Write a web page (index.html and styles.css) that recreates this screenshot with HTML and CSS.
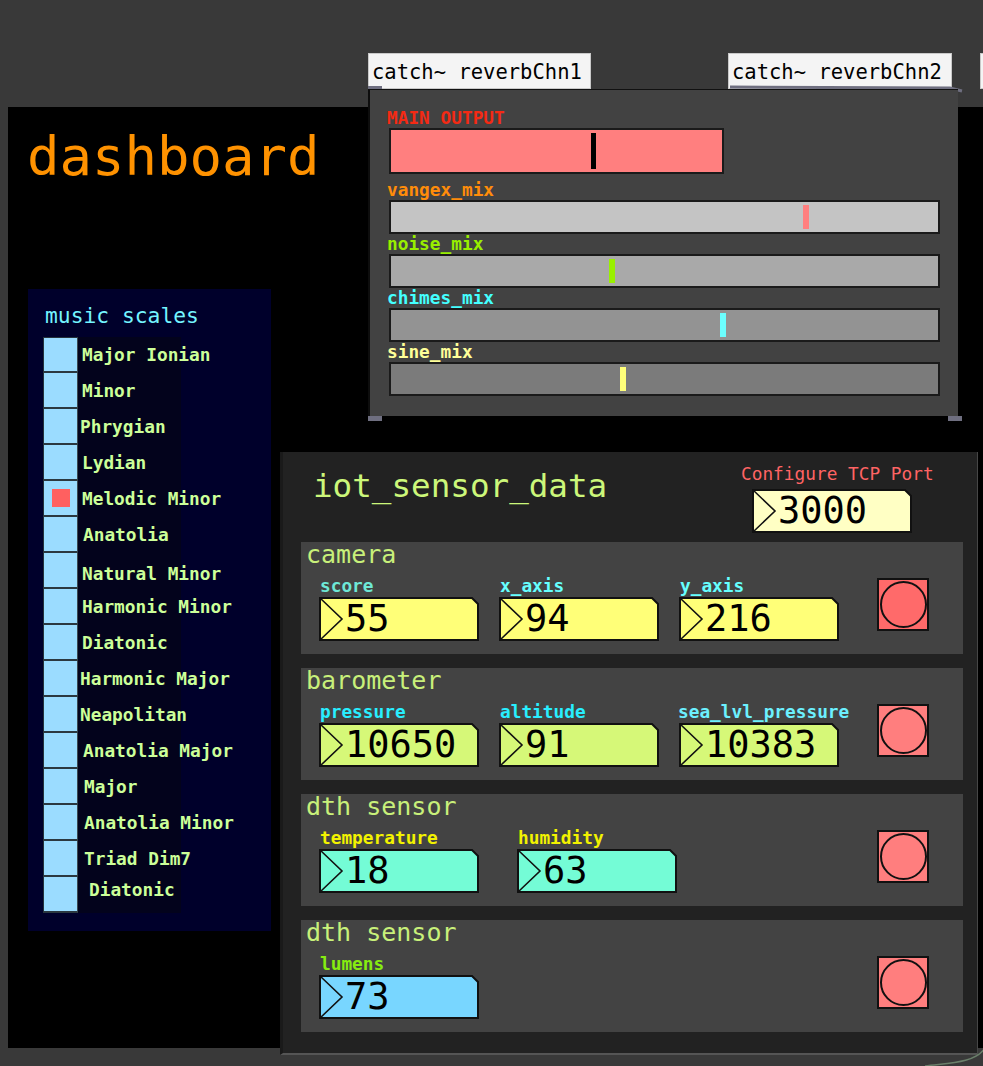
FILE: index.html
```html
<!DOCTYPE html>
<html lang="en">
<head>
<meta charset="utf-8">
<title>dashboard</title>
<link rel="stylesheet" href="styles.css">
</head>
<body>
<div class="patch">

  <section class="dash">
    <h1 class="dash-title">dashboard</h1>
    <div class="scales">
      <div class="scales-title">music scales</div>
      <div class="vradio">
        <div class="vrow"><span class="cell"></span><span class="lbl">Major Ionian</span></div>
        <div class="vrow"><span class="cell"></span><span class="lbl">Minor</span></div>
        <div class="vrow"><span class="cell"></span><span class="lbl l-left">Phrygian</span></div>
        <div class="vrow"><span class="cell"></span><span class="lbl">Lydian</span></div>
        <div class="vrow"><span class="cell on"><b class="dot"></b></span><span class="lbl">Melodic Minor</span></div>
        <div class="vrow"><span class="cell"></span><span class="lbl l-r1">Anatolia</span></div>
        <div class="vrow"><span class="cell"></span><span class="lbl l-down">Natural Minor</span></div>
        <div class="vrow"><span class="cell"></span><span class="lbl">Harmonic Minor</span></div>
        <div class="vrow"><span class="cell"></span><span class="lbl">Diatonic</span></div>
        <div class="vrow"><span class="cell"></span><span class="lbl l-left">Harmonic Major</span></div>
        <div class="vrow"><span class="cell"></span><span class="lbl l-left">Neapolitan</span></div>
        <div class="vrow"><span class="cell"></span><span class="lbl l-r1">Anatolia Major</span></div>
        <div class="vrow"><span class="cell"></span><span class="lbl l-r2">Major</span></div>
        <div class="vrow"><span class="cell"></span><span class="lbl l-r2">Anatolia Minor</span></div>
        <div class="vrow"><span class="cell"></span><span class="lbl l-r2">Triad Dim7</span></div>
        <div class="vrow"><span class="cell"></span><span class="lbl l-last">Diatonic</span></div>
      </div>
    </div>
  </section>

  <div class="obj catch catch1">catch~ reverbChn1</div>
  <div class="obj catch catch2">catch~ reverbChn2</div>
  <div class="obj catch catch3"></div>
  <span class="port port-c1"></span>
  <svg class="cord" width="240" height="10" viewBox="0 0 240 10"><polyline points="2,3 222,4 234,7" /></svg>

  <section class="mixer">
    <div class="mlabel c-red">MAIN OUTPUT</div>
    <div class="slider s-main"><i class="knob k-black" style="left:60.4%"></i></div>
    <div class="mlabel c-orange first">vangex_mix</div>
    <div class="slider s-1"><i class="knob k-salmon" style="left:75.3%"></i></div>
    <div class="mlabel c-green">noise_mix</div>
    <div class="slider s-2"><i class="knob k-green" style="left:39.9%"></i></div>
    <div class="mlabel c-cyan">chimes_mix</div>
    <div class="slider s-3"><i class="knob k-cyan" style="left:60.1%"></i></div>
    <div class="mlabel c-yellow">sine_mix</div>
    <div class="slider s-4"><i class="knob k-yellow" style="left:41.9%"></i></div>
  </section>
  <span class="port port-bl"></span>
  <span class="port port-br"></span>

  <section class="iot">
    <header class="iot-head">
      <h2 class="iot-title">iot_sensor_data</h2>
      <div class="tcp">
        <div class="tcp-label">Configure TCP Port</div>
        <div class="nbox nb-cream tcp-box">
          <svg class="nshape" viewBox="0 0 160 44"><polygon points="1,1 153,1 159,7 159,43 1,43"/><polyline points="1,1 23,22 1,43"/></svg>
          <span class="nval">3000</span>
        </div>
      </div>
    </header>

    <div class="groups">
      <div class="group">
        <div class="gtitle">camera</div>
        <div class="fields">
          <div class="field"><div class="flabel c-mint">score</div>
            <div class="nbox nb-yellow"><svg class="nshape" viewBox="0 0 160 44"><polygon points="1,1 153,1 159,7 159,43 1,43"/><polyline points="1,1 23,22 1,43"/></svg><span class="nval">55</span></div></div>
          <div class="field"><div class="flabel c-aqua">x_axis</div>
            <div class="nbox nb-yellow"><svg class="nshape" viewBox="0 0 160 44"><polygon points="1,1 153,1 159,7 159,43 1,43"/><polyline points="1,1 23,22 1,43"/></svg><span class="nval">94</span></div></div>
          <div class="field"><div class="flabel c-aqua">y_axis</div>
            <div class="nbox nb-yellow"><svg class="nshape" viewBox="0 0 160 44"><polygon points="1,1 153,1 159,7 159,43 1,43"/><polyline points="1,1 23,22 1,43"/></svg><span class="nval">216</span></div></div>
        </div>
        <div class="bang bang-hot"><i></i></div>
      </div>

      <div class="group">
        <div class="gtitle">barometer</div>
        <div class="fields">
          <div class="field"><div class="flabel c-sky">pressure</div>
            <div class="nbox nb-lime"><svg class="nshape" viewBox="0 0 160 44"><polygon points="1,1 153,1 159,7 159,43 1,43"/><polyline points="1,1 23,22 1,43"/></svg><span class="nval">10650</span></div></div>
          <div class="field"><div class="flabel c-sky">altitude</div>
            <div class="nbox nb-lime"><svg class="nshape" viewBox="0 0 160 44"><polygon points="1,1 153,1 159,7 159,43 1,43"/><polyline points="1,1 23,22 1,43"/></svg><span class="nval">91</span></div></div>
          <div class="field"><div class="flabel c-sky2 f-wide">sea_lvl_pressure</div>
            <div class="nbox nb-lime"><svg class="nshape" viewBox="0 0 160 44"><polygon points="1,1 153,1 159,7 159,43 1,43"/><polyline points="1,1 23,22 1,43"/></svg><span class="nval">10383</span></div></div>
        </div>
        <div class="bang"><i></i></div>
      </div>

      <div class="group">
        <div class="gtitle">dth sensor</div>
        <div class="fields fields-wide">
          <div class="field"><div class="flabel c-yel">temperature</div>
            <div class="nbox nb-mint"><svg class="nshape" viewBox="0 0 160 44"><polygon points="1,1 153,1 159,7 159,43 1,43"/><polyline points="1,1 23,22 1,43"/></svg><span class="nval">18</span></div></div>
          <div class="field"><div class="flabel c-yel">humidity</div>
            <div class="nbox nb-mint"><svg class="nshape" viewBox="0 0 160 44"><polygon points="1,1 153,1 159,7 159,43 1,43"/><polyline points="1,1 23,22 1,43"/></svg><span class="nval">63</span></div></div>
        </div>
        <div class="bang"><i></i></div>
      </div>

      <div class="group">
        <div class="gtitle">dth sensor</div>
        <div class="fields">
          <div class="field"><div class="flabel c-lime">lumens</div>
            <div class="nbox nb-blue"><svg class="nshape" viewBox="0 0 160 44"><polygon points="1,1 153,1 159,7 159,43 1,43"/><polyline points="1,1 23,22 1,43"/></svg><span class="nval">73</span></div></div>
        </div>
        <div class="bang"><i></i></div>
      </div>
    </div>
  </section>

  <svg class="cord2" width="70" height="20" viewBox="0 0 70 20"><path d="M0,18 C20,15 50,16 60,0" /></svg>
</div>
</body>
</html>
```

FILE: styles.css
```css
html, body {
  margin: 0;
  padding: 0;
  background: #393939;
  overflow: hidden;
}

.patch {
  position: relative;
  width: 983px;
  height: 1066px;
  overflow: hidden;
  font-family: "DejaVu Sans Mono", "Liberation Mono", monospace;
}

/* ---------- black dashboard canvas ---------- */
.dash {
  position: absolute;
  left: 8px;
  top: 107px;
  width: 975px;
  height: 941px;
  background: #000;
  box-sizing: border-box;
  padding: 23px 0 0 19px;
}

.dash-title {
  margin: 0;
  font-weight: normal;
  font-size: 54px;
  line-height: 53px;
  color: #ff9200;
}

.scales {
  margin: 106px 0 0 1px;
  width: 243px;
  height: 642px;
  background: #00002b;
  box-sizing: border-box;
  padding: 16px 0 0 15px;
}

.scales-title {
  font-size: 21.3px;
  line-height: 21px;
  color: #74f4ff;
  padding-left: 2px;
}

.vradio {
  margin-top: 11px;
  display: flex;
  flex-direction: column;
}

.vrow {
  display: grid;
  grid-template-columns: 35px 103px;
  height: 36px;
}

.cell {
  box-sizing: border-box;
  height: 36px;
  background: #9bdcff;
  border-left: 1px solid #25323a;
  border-right: 1px solid #3b4a52;
  border-bottom: 2px solid #2b3840;
  display: flex;
  align-items: center;
  justify-content: center;
}

.vrow:first-child .cell { border-top: 1px solid #25323a; }

.dot {
  width: 18px;
  height: 18px;
  background: #ff6060;
  margin-top: -1px;
}

.lbl {
  background: #03031c;
  font-weight: bold;
  font-size: 17.8px;
  line-height: 36px;
  color: #ccff99;
  white-space: nowrap;
  padding-left: 4px;
  box-sizing: border-box;
}

.lbl.l-left { padding-left: 2px; }
.lbl.l-r1 { padding-left: 5px; }
.lbl.l-r2 { padding-left: 6px; }
.lbl.l-down { padding-top: 3px; }
.lbl.l-last { padding-left: 11px; line-height: 26px; }

/* ---------- pd objects ---------- */
.obj.catch {
  position: absolute;
  top: 53px;
  height: 36px;
  box-sizing: border-box;
  background: #f4f4f4;
  border: 1px solid #c9c9c9;
  color: #000;
  font-size: 20.5px;
  line-height: 34px;
  padding: 1px 0 0 3px;
  white-space: nowrap;
}

.catch1 { left: 368px; width: 223px; }
.catch2 { left: 728px; width: 224px; }
.catch3 { left: 980px; top: 35px; width: 60px; height: 37px; }

.port {
  position: absolute;
  width: 14px;
  height: 5px;
  background: #6f6f80;
}

.port-c1 { left: 368px; top: 86px; }
.port-bl { left: 368px; top: 416px; }
.port-br { left: 948px; top: 416px; }

.cord {
  position: absolute;
  left: 728px;
  top: 84px;
}

.cord polyline {
  fill: none;
  stroke: #6f6f80;
  stroke-width: 3;
}

.cord2 {
  position: absolute;
  left: 925px;
  top: 1048px;
}

.cord2 path {
  fill: none;
  stroke: #6a7f6a;
  stroke-width: 1.5;
}

/* ---------- mixer panel ---------- */
.mixer {
  position: absolute;
  left: 368px;
  top: 89px;
  width: 590px;
  height: 327px;
  box-sizing: border-box;
  background: #424242;
  border-left: 2px solid #0d0d0d;
  border-top: 1px solid #111;
  padding: 18px 0 0 19px;
  display: flex;
  flex-direction: column;
  align-items: flex-start;
}

.mlabel {
  font-weight: bold;
  font-size: 17.8px;
  line-height: 20px;
  height: 20px;
  margin-left: -2px;
  white-space: nowrap;
}

.mlabel.first { margin-top: 6px; }

.c-red { color: #f42a14; }
.c-orange { color: #ff8c0a; }
.c-green { color: #99ee00; }
.c-cyan { color: #44ffff; }
.c-yellow { color: #ffff99; }

.slider {
  position: relative;
  box-sizing: border-box;
  border: 2px solid #1a1a1a;
  width: 551px;
  height: 34px;
}

.s-main { width: 335px; height: 46px; background: #ff7f7f; }
.s-1 { background: #c4c4c4; }
.s-2 { background: #a9a9a9; }
.s-3 { background: #939393; }
.s-4 { background: #7b7b7b; }

.knob {
  position: absolute;
  top: 3px;
  bottom: 3px;
  width: 6px;
}

.k-black { background: #000; width: 5px; }
.k-salmon { background: #ff7f7f; }
.k-green { background: #99f000; }
.k-cyan { background: #6cffff; }
.k-yellow { background: #ffff7a; }

/* ---------- iot panel ---------- */
.iot {
  position: absolute;
  left: 280px;
  top: 452px;
  width: 698px;
  height: 603px;
  box-sizing: border-box;
  background: #222;
  border-left: 3px solid #1a1a1a;
  border-right: 1px solid #474747;
  border-bottom: 2px solid #555;
  padding-top: 13px;
}

.iot-head {
  display: flex;
  align-items: flex-start;
  height: 77px;
}

.iot-title {
  margin: 5px 0 0 30px;
  font-weight: normal;
  font-size: 32.6px;
  line-height: 32px;
  color: #ccf77a;
}

.tcp {
  margin-left: auto;
  margin-right: 41px;
  width: 195px;
  display: flex;
  flex-direction: column;
  align-items: flex-start;
}

.tcp-label {
  font-size: 17.8px;
  line-height: 18px;
  color: #ff6464;
  white-space: nowrap;
}

.tcp-box { margin: 6px 0 0 11px; }

.groups {
  margin-left: 18px;
  width: 662px;
  display: flex;
  flex-direction: column;
  gap: 14px;
}

.group {
  height: 112px;
  background: #434343;
  box-sizing: border-box;
  padding: 0 34px 0 5px;
  display: grid;
  grid-template-columns: 1fr 52px;
  grid-template-rows: 25px 1fr;
}

.gtitle {
  grid-column: 1;
  grid-row: 1;
  font-size: 25px;
  line-height: 25px;
  color: #c8f07a;
  white-space: nowrap;
}

.fields {
  grid-column: 1;
  grid-row: 2;
  margin-left: 13px;
  display: flex;
  gap: 20px;
}

.fields-wide { gap: 38px; }

.field {
  display: flex;
  flex-direction: column;
}

.flabel {
  margin-top: 10px;
  height: 18px;
  font-weight: bold;
  font-size: 17.8px;
  line-height: 18px;
  white-space: nowrap;
  margin-bottom: 2px;
  padding-left: 1px;
}

.f-wide { margin-left: -2px; }

.c-mint { color: #6ee8d6; }
.c-aqua { color: #66ffff; }
.c-sky { color: #28eeff; }
.c-sky2 { color: #6cf0ff; }
.c-yel { color: #f2f200; }
.c-lime { color: #86ec10; }

/* number box */
.nbox {
  display: grid;
  width: 160px;
  height: 44px;
}

.nbox > * { grid-area: 1 / 1; }

.nshape {
  width: 160px;
  height: 44px;
  display: block;
}

.nshape polygon {
  stroke: #111;
  stroke-width: 2;
}

.nshape polyline {
  fill: none;
  stroke: #111;
  stroke-width: 1.6;
}

.nb-cream polygon { fill: #ffffc4; }
.nb-yellow polygon { fill: #ffff78; }
.nb-lime polygon { fill: #d6f878; }
.nb-mint polygon { fill: #74fcd6; }
.nb-blue polygon { fill: #78d6ff; }

.nval {
  font-size: 37px;
  line-height: 44px;
  color: #000;
  padding-left: 26px;
  white-space: nowrap;
}

/* bang */
.bang {
  grid-column: 2;
  grid-row: 1 / span 2;
  align-self: start;
  margin-top: 36px;
  width: 52px;
  height: 53px;
  box-sizing: border-box;
  border: 2px solid #111;
  background: #ff7e7e;
  display: flex;
  align-items: center;
  justify-content: center;
}

.bang-hot { background: #ff6a6a; }

.bang i {
  width: 47px;
  height: 47px;
  box-sizing: border-box;
  border: 2px solid #111;
  border-radius: 50%;
}
```
